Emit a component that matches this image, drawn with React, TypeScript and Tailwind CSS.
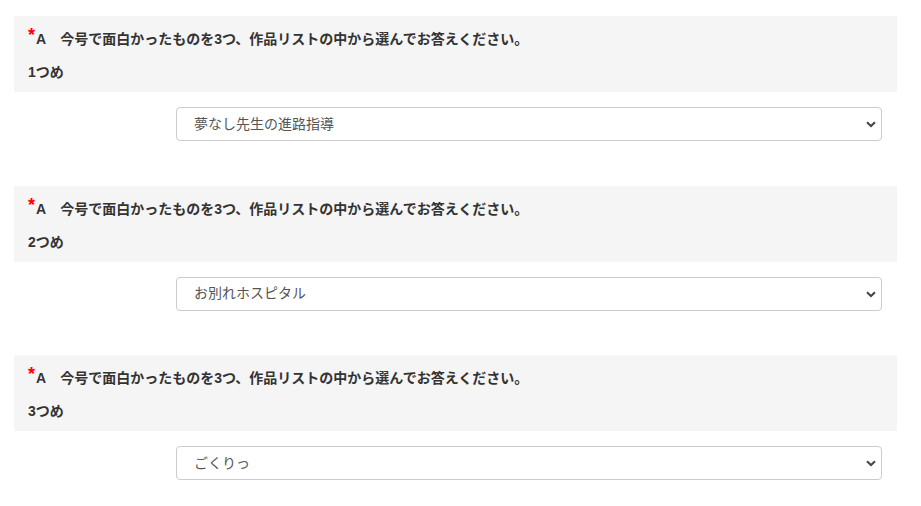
import React from "react";

const items = [
  { label: "1つめ", value: "夢なし先生の進路指導" },
  { label: "2つめ", value: "お別れホスピタル" },
  { label: "3つめ", value: "ごくりっ" },
];

function Chevron() {
  return (
    <svg width="10" height="7" viewBox="0 0 10 7" className="absolute right-[6px] top-[14px] pointer-events-none">
      <path d="M1 1.2 L5 5 L9 1.2" fill="none" stroke="#444" strokeWidth="2" />
    </svg>
  );
}

export default function App() {
  return (
    <div
      className="bg-white pt-4 pl-[14px] pr-[24px] flex flex-col gap-[44.5px] text-[#333]"
      style={{ fontFamily: '"Liberation Sans", "Noto Sans CJK JP", sans-serif' }}
    >
      {items.map((it, i) => (
        <div key={i} className="flex flex-col gap-[15px]">
          <div className="bg-[#f5f5f5] h-[76px] pl-[14px] pt-[13px]">
            <div className="h-5 flex items-center text-[14px] font-bold leading-5">
              <span className="text-[#ff0000] text-[18px] leading-none relative top-[-4px] mr-[1px]">*</span>
              <span>A</span>
              <span className="ml-[14px]">今号で面白かったものを3つ、作品リストの中から選んでお答えください。</span>
            </div>
            <div className="mt-[13px] h-5 leading-5 text-[14px] font-bold">{it.label}</div>
          </div>
          <div className="pl-[162px] pr-[15px]">
            <div className="relative">
              <select
                defaultValue={it.value}
                className="appearance-none w-full h-[34px] border border-[#ccc] rounded-[4px] bg-white pl-[17px] text-[14px] text-[#555] outline-none"
                style={{ fontFamily: '"Liberation Sans", "Noto Sans CJK JP", sans-serif' }}
              >
                <option value={it.value}>{it.value}</option>
              </select>
              <Chevron />
            </div>
          </div>
        </div>
      ))}
    </div>
  );
}
